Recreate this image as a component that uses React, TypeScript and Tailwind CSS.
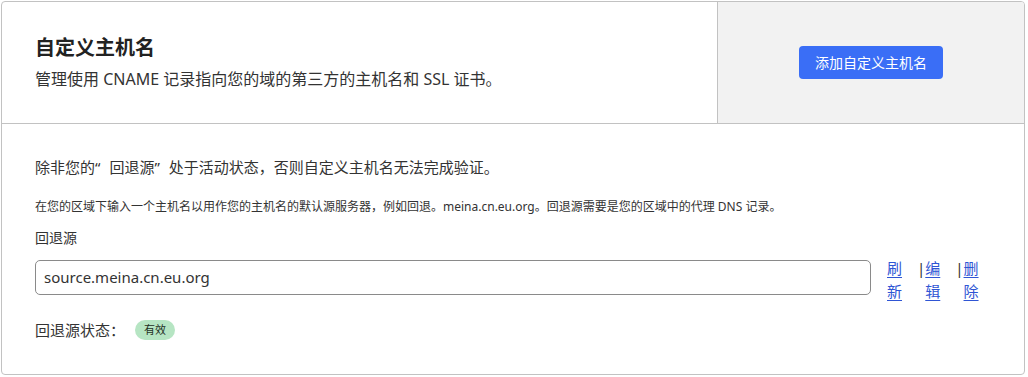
import React from "react";

const FONT = { fontFamily: '"Segoe UI", "Noto Sans", "Noto Sans CJK SC", sans-serif' };

function VerticalLink({ label }: { label: string }) {
  return (
    <a href="#" className="inline-block w-[16px] text-[15px] leading-[23px] text-[#2f55d4] underline underline-offset-[3px]">
      {label}
    </a>
  );
}

export default function App() {
  return (
    <div className="bg-white" style={FONT}>
      <div className="ml-[1px] mt-[1px] h-[374px] w-[1024px] overflow-hidden rounded-[4px] border border-[#c2c2c2] text-[#333]">
        <div className="flex h-[122px] border-b border-[#c2c2c2]">
          <div className="flex flex-1 flex-col justify-center pl-[33px]">
            <h1 className="text-[20px] font-bold leading-[26px] text-[#222]">自定义主机名</h1>
            <p className="mt-[6px] text-[16px] leading-[24px]">管理使用 CNAME 记录指向您的域的第三方的主机名和 SSL 证书。</p>
          </div>
          <div className="flex w-[307px] items-center justify-center border-l border-[#c2c2c2] bg-[#f2f2f2]">
            <button type="button" className="h-[33px] w-[144px] rounded-[4px] bg-[#3a6ef6] text-[14px] text-white">
              添加自定义主机名
            </button>
          </div>
        </div>

        <div className="pl-[33px] pt-[31px]">
          <p className="text-[15px] leading-[24px]">
            除非您的<span className="pr-[9px]">“</span>回退源<span className="pr-[9px]">”</span>处于活动状态，否则自定义主机名无法完成验证。
          </p>
          <p className="mt-[19px] text-[12px] leading-[18px]">
            在您的区域下输入一个主机名以用作您的主机名的默认源服务器，例如回退。meina.cn.eu.org。回退源需要是您的区域中的代理 DNS 记录。
          </p>
          <p className="mt-[12px] text-[14px] leading-[20px]">回退源</p>
          <div className="mt-[12px] flex h-[35px] items-start">
            <div className="flex h-[35px] w-[836px] shrink-0 items-center rounded-[5px] border border-[#8a8a8a] px-[8px] text-[15px]">
              source.meina.cn.eu.org
            </div>
            <div className="ml-[16px] mt-[-3px] flex shrink-0 items-start">
              <VerticalLink label="刷新" />
              <span className="ml-[14px] text-[15px] leading-[23px] text-[#333]">|</span>
              <VerticalLink label="编辑" />
              <span className="ml-[14px] text-[15px] leading-[23px] text-[#333]">|</span>
              <VerticalLink label="删除" />
            </div>
          </div>
          <div className="mt-[24px] flex items-center">
            <span className="text-[15px] leading-[22px]">回退源状态：</span>
            <span className="ml-[10px] flex h-[20px] items-center rounded-full bg-[#b6e5c3] px-[9px] text-[11px] text-[#1f2f24]">
              有效
            </span>
          </div>
        </div>
      </div>
    </div>
  );
}
